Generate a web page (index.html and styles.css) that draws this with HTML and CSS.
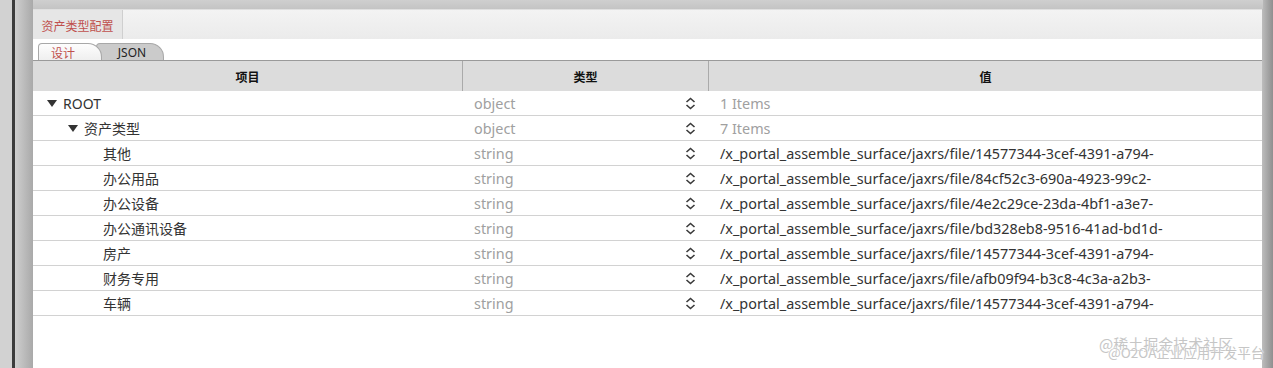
FILE: index.html
```html
<!DOCTYPE html>
<html lang="zh">
<head>
<meta charset="utf-8">
<link rel="stylesheet" href="styles.css">
</head>
<body>
<div class="page">
  <div class="gutter-left"></div>
  <div class="main">
    <div class="panel">
      <div class="tabstrip">
        <div class="maintab">资产类型配置</div>
      </div>
      <div class="subtabs">
        <div class="subtab active">设计</div>
        <div class="subtab json">JSON</div>
      </div>
      <div class="grid">
        <div class="row head">
          <div class="h1">项目</div>
          <div class="h2">类型</div>
          <div class="h3">值</div>
        </div>
        <div class="row">
          <div class="c1"><span class="name l0"><span class="tri"></span>ROOT</span></div>
          <div class="c2"><span class="t">object</span><svg class="chev" viewBox="0 0 11 13"><path d="M1.5 5L5.5 1.5L9.5 5M1.5 8L5.5 11.5L9.5 8" fill="none" stroke="#3a3a3a" stroke-width="1.6"/></svg></div>
          <div class="c3">1 Items</div>
        </div>
        <div class="row">
          <div class="c1"><span class="name l1"><span class="tri"></span>资产类型</span></div>
          <div class="c2"><span class="t">object</span><svg class="chev" viewBox="0 0 11 13"><path d="M1.5 5L5.5 1.5L9.5 5M1.5 8L5.5 11.5L9.5 8" fill="none" stroke="#3a3a3a" stroke-width="1.6"/></svg></div>
          <div class="c3">7 Items</div>
        </div>
        <div class="row">
          <div class="c1"><span class="name l2">其他</span></div>
          <div class="c2"><span class="t">string</span><svg class="chev" viewBox="0 0 11 13"><path d="M1.5 5L5.5 1.5L9.5 5M1.5 8L5.5 11.5L9.5 8" fill="none" stroke="#3a3a3a" stroke-width="1.6"/></svg></div>
          <div class="c3 v">/x_portal_assemble_surface/jaxrs/file/14577344-3cef-4391-a794-</div>
        </div>
        <div class="row">
          <div class="c1"><span class="name l2">办公用品</span></div>
          <div class="c2"><span class="t">string</span><svg class="chev" viewBox="0 0 11 13"><path d="M1.5 5L5.5 1.5L9.5 5M1.5 8L5.5 11.5L9.5 8" fill="none" stroke="#3a3a3a" stroke-width="1.6"/></svg></div>
          <div class="c3 v">/x_portal_assemble_surface/jaxrs/file/84cf52c3-690a-4923-99c2-</div>
        </div>
        <div class="row">
          <div class="c1"><span class="name l2">办公设备</span></div>
          <div class="c2"><span class="t">string</span><svg class="chev" viewBox="0 0 11 13"><path d="M1.5 5L5.5 1.5L9.5 5M1.5 8L5.5 11.5L9.5 8" fill="none" stroke="#3a3a3a" stroke-width="1.6"/></svg></div>
          <div class="c3 v">/x_portal_assemble_surface/jaxrs/file/4e2c29ce-23da-4bf1-a3e7-</div>
        </div>
        <div class="row">
          <div class="c1"><span class="name l2">办公通讯设备</span></div>
          <div class="c2"><span class="t">string</span><svg class="chev" viewBox="0 0 11 13"><path d="M1.5 5L5.5 1.5L9.5 5M1.5 8L5.5 11.5L9.5 8" fill="none" stroke="#3a3a3a" stroke-width="1.6"/></svg></div>
          <div class="c3 v">/x_portal_assemble_surface/jaxrs/file/bd328eb8-9516-41ad-bd1d-</div>
        </div>
        <div class="row">
          <div class="c1"><span class="name l2">房产</span></div>
          <div class="c2"><span class="t">string</span><svg class="chev" viewBox="0 0 11 13"><path d="M1.5 5L5.5 1.5L9.5 5M1.5 8L5.5 11.5L9.5 8" fill="none" stroke="#3a3a3a" stroke-width="1.6"/></svg></div>
          <div class="c3 v">/x_portal_assemble_surface/jaxrs/file/14577344-3cef-4391-a794-</div>
        </div>
        <div class="row">
          <div class="c1"><span class="name l2">财务专用</span></div>
          <div class="c2"><span class="t">string</span><svg class="chev" viewBox="0 0 11 13"><path d="M1.5 5L5.5 1.5L9.5 5M1.5 8L5.5 11.5L9.5 8" fill="none" stroke="#3a3a3a" stroke-width="1.6"/></svg></div>
          <div class="c3 v">/x_portal_assemble_surface/jaxrs/file/afb09f94-b3c8-4c3a-a2b3-</div>
        </div>
        <div class="row">
          <div class="c1"><span class="name l2">车辆</span></div>
          <div class="c2"><span class="t">string</span><svg class="chev" viewBox="0 0 11 13"><path d="M1.5 5L5.5 1.5L9.5 5M1.5 8L5.5 11.5L9.5 8" fill="none" stroke="#3a3a3a" stroke-width="1.6"/></svg></div>
          <div class="c3 v">/x_portal_assemble_surface/jaxrs/file/14577344-3cef-4391-a794-</div>
        </div>
      </div>
    </div>
  </div>
  <div class="gutter-right"></div>
  <div class="wm wm1">@稀土掘金技术社区</div>
  <div class="wm wm2">@O2OA企业应用开发平台</div>
</div>
</body>
</html>
```
FILE: styles.css
```css
html, body {
  margin: 0;
  padding: 0;
}
body {
  background: #c8c8c8;
  font-family: "Noto Sans", "Noto Sans CJK SC", sans-serif;
}
.page {
  position: relative;
  display: flex;
  width: 1273px;
  height: 368px;
  overflow: hidden;
}
.gutter-left {
  width: 33px;
  flex: none;
  background: linear-gradient(to right, #d2d2d2 0, #d2d2d2 12px, #3c3c3c 12px, #3c3c3c 15px, #cfcfcf 15px, #a9a9a9 33px);
}
.main {
  flex: 1;
  padding-top: 9px;
  background: linear-gradient(to bottom, #cfcfcf, #c4c4c4 9px);
  display: flex;
  flex-direction: column;
}
.gutter-right {
  width: 10px;
  flex: none;
  background: linear-gradient(to right, #b9b9b9, #8f8f8f);
}
.panel {
  flex: 1;
  background: #fff;
  display: flex;
  flex-direction: column;
  border-right: 1px solid #bbb;
}
.tabstrip {
  height: 30px;
  flex: none;
  background: linear-gradient(to bottom, #f3f3f3, #ebebeb);
  display: flex;
  border-top: 1px solid #e0e0e0;
  box-sizing: border-box;
}
.maintab {
  width: 90px;
  box-sizing: border-box;
  background: #e6e6e6;
  border-right: 1px solid #cfcfcf;
  color: #c0504d;
  font-size: 12px;
  font-family: "Noto Sans CJK SC", sans-serif;
  display: flex;
  align-items: center;
  justify-content: center;
  padding-top: 2px;
}
.subtabs {
  height: 22px;
  flex: none;
  box-sizing: border-box;
  border-bottom: 1px solid #9a9a9a;
  display: flex;
  align-items: flex-end;
  padding-left: 5px;
}
.subtab {
  height: 17px;
  box-sizing: border-box;
  font-size: 12px;
  display: flex;
  align-items: center;
  justify-content: center;
  border: 1px solid #a8a8a8;
  border-bottom: none;
  border-radius: 4px 14px 0 0;
}
.subtab.active {
  width: 64px;
  background: linear-gradient(to bottom, #fdfdfd, #efefef);
  color: #c0504d;
  font-family: "Noto Sans CJK SC", sans-serif;
  position: relative;
  z-index: 1;
  padding-right: 14px;
}
.subtab.json {
  width: 68px;
  margin-left: -6px;
  background: #cbcbcb;
  color: #222;
  padding-left: 4px;
}
.grid {
  display: flex;
  flex-direction: column;
}
.row {
  display: flex;
  height: 25px;
  box-sizing: border-box;
  border-bottom: 1px solid #d2d2d2;
  font-size: 14.4px;
  align-items: center;
}
.row.head {
  height: 30px;
  background: #dcdcdc;
  border-bottom: none;
  font-size: 12px;
  font-weight: bold;
  color: #111;
  font-family: "Noto Sans CJK SC", sans-serif;
  align-items: stretch;
}
.h1, .h2, .h3 {
  display: flex;
  align-items: center;
  justify-content: center;
  box-sizing: border-box;
}
.h1 {
  width: 430px;
  border-right: 1px solid #aaa;
}
.h2 {
  width: 246px;
  border-right: 1px solid #aaa;
}
.h3 {
  flex: 1;
}
.c1 {
  width: 430px;
  flex: none;
}
.c2 {
  width: 246px;
  flex: none;
  display: flex;
  align-items: center;
  box-sizing: border-box;
  padding: 0 13px 0 11px;
  color: #a0a0a0;
}
.c2 .t {
  flex: 1;
}
.chev {
  width: 11px;
  height: 13px;
}
.c3 {
  flex: 1;
  padding-left: 11px;
  color: #a0a0a0;
  white-space: nowrap;
  overflow: hidden;
}
.c3.v {
  color: #333;
}
.name {
  display: flex;
  align-items: center;
  color: #333;
  font-size: 14px;
}
.name.l0 { padding-left: 14px; }
.name.l1 { padding-left: 35px; }
.name.l2 { padding-left: 70px; }
.tri {
  width: 0;
  height: 0;
  border-left: 5px solid transparent;
  border-right: 5px solid transparent;
  border-top: 7px solid #333;
  margin-right: 6px;
}
.wm {
  position: absolute;
  font-size: 15px;
  font-family: "Noto Sans CJK SC", sans-serif;
  color: #c6c6c6;
  text-shadow: 0 0 2px #fff, 0 0 1px #fff;
  white-space: nowrap;
}
.wm1 { left: 1099px; top: 333px; }
.wm2 { left: 1108px; top: 342px; font-size: 13.5px; }
```
